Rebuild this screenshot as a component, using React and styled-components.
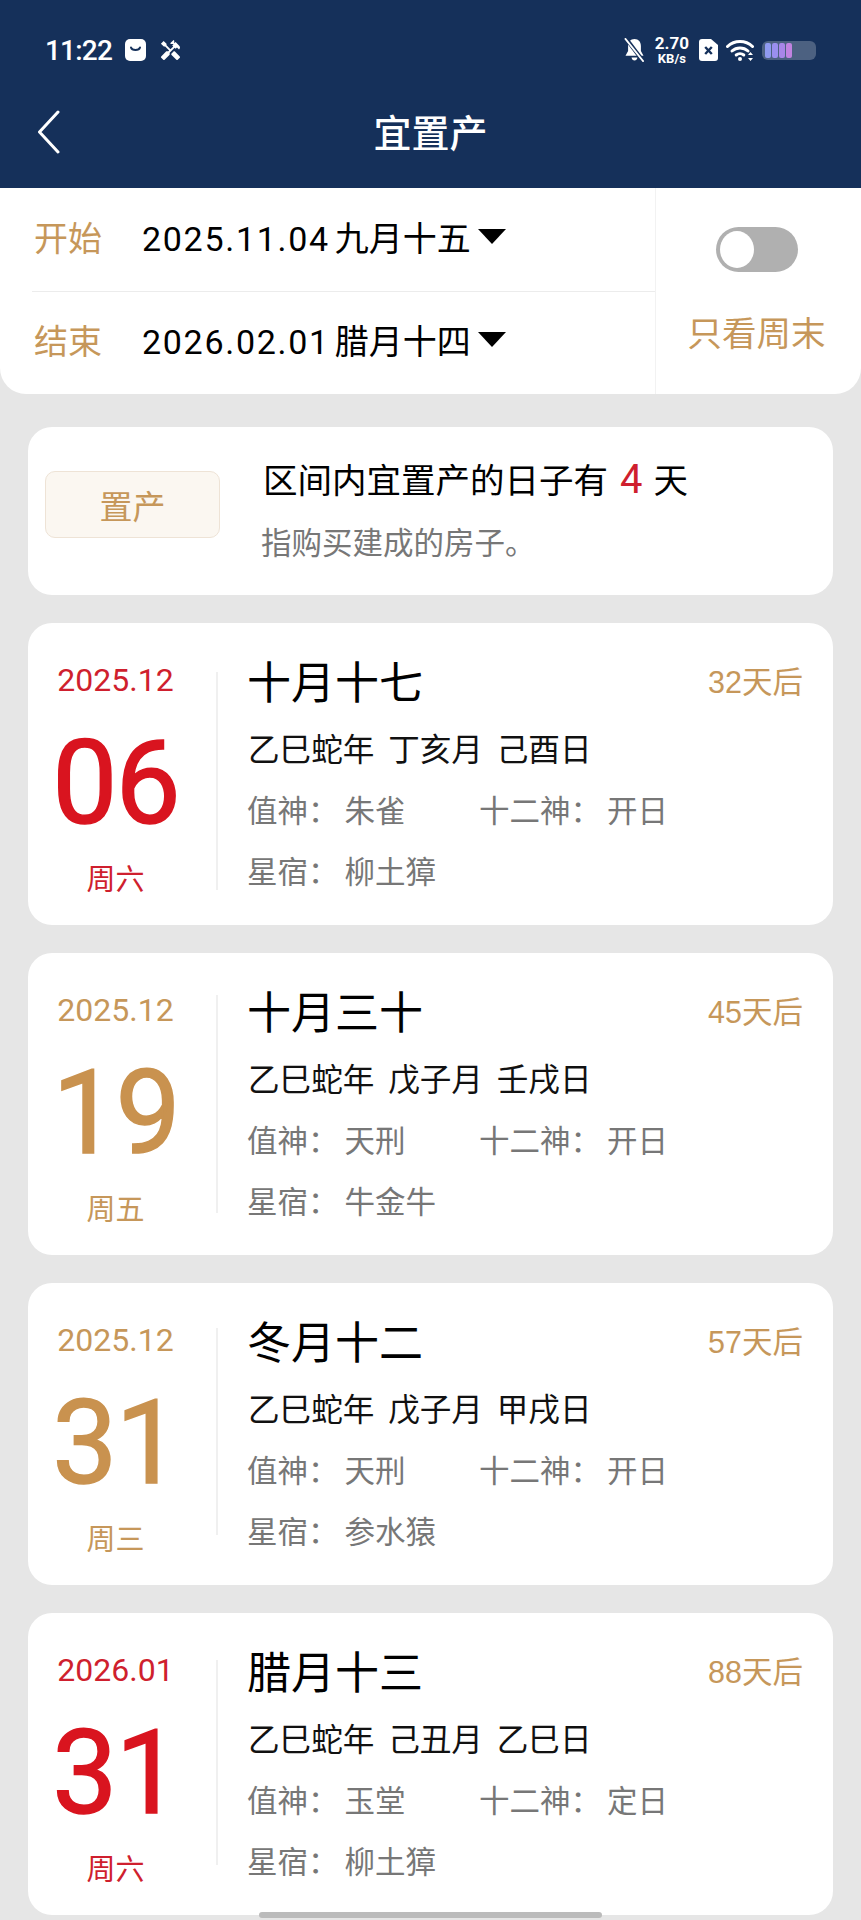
import React from 'react';
import styled, { createGlobalStyle } from 'styled-components';
import { MdHandyman } from 'react-icons/md';

const GOLD = '#c6975a';
const RED = '#cf1f2e';
const GREY = '#777777';
const CJK = '"Liberation Sans", "Noto Sans CJK SC", sans-serif';
const COLON = '\uFF1A';

const GlobalStyle = createGlobalStyle`
  html, body {
    margin: 0;
    padding: 0;
    background: #e6e6e6;
  }
  * {
    box-sizing: border-box;
  }
`;

const Page = styled.div`
  position: relative;
  width: 861px;
  height: 1920px;
  overflow: hidden;
  background: #e6e6e6;
  font-family: ${CJK};
`;

const Header = styled.header`
  height: 188px;
  padding: 28px 0 12px;
  background: #15305a;
  color: #fff;
`;

const StatusBar = styled.div`
  display: flex;
  align-items: center;
  justify-content: space-between;
  height: 44px;
  padding: 0 45px 0 45px;
  margin-bottom: 16px;
`;

const StatusGroup = styled.div`
  display: flex;
  align-items: center;
`;

const Clock = styled.span`
  font-family: Roboto, sans-serif;
  font-size: 28px;
  font-weight: 500;
  letter-spacing: -0.8px;
  margin-right: 13px;
`;

const Speed = styled.div`
  display: flex;
  flex-direction: column;
  align-items: center;
  margin: 0 10px;
  font-family: Roboto, sans-serif;
  font-weight: 700;
`;

const SpeedValue = styled.span`
  font-size: 17px;
  line-height: 17px;
`;

const SpeedUnit = styled.span`
  font-size: 13px;
  line-height: 13px;
`;

const Battery = styled.div`
  display: flex;
  gap: 1px;
  width: 54px;
  height: 19px;
  margin-left: 8px;
  padding: 2px 3px;
  border-radius: 6px;
  background: rgba(255, 255, 255, 0.24);
`;

const BatteryCell = styled.span`
  width: 6px;
  border-radius: 2px;
  background: ${(p) => p.$color};
`;

const NavBar = styled.div`
  display: grid;
  grid-template-columns: 1fr auto 1fr;
  align-items: center;
  height: 88px;
`;

const BackSlot = styled.div`
  display: flex;
  padding-left: 37px;
`;

const Title = styled.h1`
  margin: 4px 0 0;
  font-size: 38px;
  font-weight: 500;
  line-height: 48px;
`;

const FilterPanel = styled.section`
  display: grid;
  grid-template-columns: 656px 1fr;
  height: 206px;
  background: #fff;
  border-radius: 0 0 26px 26px;
`;

const DateColumn = styled.div`
  display: flex;
  flex-direction: column;
  padding-left: 32px;
  border-right: 1px solid #f2f2f2;
`;

const DateRow = styled.div`
  display: flex;
  align-items: center;
  height: ${(p) => p.$height}px;
  padding: 0 0 6px 2px;
  border-bottom: ${(p) => (p.$divided ? '1px solid #ececec' : 'none')};
`;

const DateLabel = styled.span`
  width: 108px;
  color: ${GOLD};
  font-size: 34px;
`;

const DateValue = styled.span`
  color: #000;
  font-size: 34px;
  white-space: nowrap;
`;

const DateDigits = styled.span`
  font-family: Roboto, sans-serif;
  letter-spacing: 1.7px;
  margin-right: 5px;
`;

const Caret = styled.span`
  width: 0;
  height: 0;
  margin-left: 7px;
  border-left: 14px solid transparent;
  border-right: 14px solid transparent;
  border-top: 15px solid #000;
`;

const WeekendColumn = styled.div`
  display: flex;
  flex-direction: column;
  align-items: center;
  padding: 39px 4px 0 0;
`;

const Toggle = styled.div`
  display: flex;
  align-items: center;
  width: 82px;
  height: 45px;
  padding-left: 4px;
  border-radius: 23px;
  background: #b0b0b0;
`;

const ToggleKnob = styled.span`
  width: 34px;
  height: 37px;
  border-radius: 50%;
  background: #fff;
`;

const WeekendLabel = styled.span`
  margin-top: 37px;
  color: ${GOLD};
  font-size: 34.5px;
  line-height: 50px;
  white-space: nowrap;
`;

const Content = styled.main`
  display: flex;
  flex-direction: column;
  gap: 28px;
  padding: 33px 28px 0;
`;

const SummaryCard = styled.div`
  display: flex;
  align-items: center;
  gap: 43px;
  height: 168px;
  padding: 0 17px;
  background: #fff;
  border-radius: 24px;
`;

const SummaryTag = styled.div`
  display: flex;
  align-items: center;
  justify-content: center;
  flex: none;
  width: 175px;
  height: 67px;
  margin-top: -13px;
  color: ${GOLD};
  font-size: 33px;
  background: #fbf7f1;
  border: 1px solid #eee3d6;
  border-radius: 10px;
`;

const SummaryText = styled.div`
  display: flex;
  flex-direction: column;
  gap: 21px;
`;

const SummaryTitle = styled.div`
  color: #000;
  font-size: 34.5px;
  line-height: 42px;
  white-space: nowrap;
`;

const SummaryCount = styled.span`
  margin: 0 11px 0 12px;
  color: ${RED};
  font-family: Roboto, sans-serif;
  font-size: 40px;
`;

const SummaryNote = styled.div`
  margin-left: -2px;
  color: ${GREY};
  font-size: 30.5px;
  line-height: 40px;
`;

const DayCard = styled.article`
  display: flex;
  height: 302px;
  background: #fff;
  border-radius: 24px;
`;

const DayColumn = styled.div`
  display: flex;
  flex-direction: column;
  align-items: center;
  justify-content: space-between;
  flex: none;
  width: 175px;
  padding: 37px 0 25px;
  margin-right: 13px;
  color: ${(p) => (p.$holiday ? RED : GOLD)};
`;

const DayMonth = styled.div`
  font-family: Roboto, sans-serif;
  font-size: 32px;
  line-height: 40px;
`;

const DayNumber = styled.div`
  margin-top: 6px;
  font-family: Roboto, sans-serif;
  font-size: 116px;
  line-height: 120px;
  letter-spacing: -2px;
  color: ${(p) => (p.$holiday ? '#d9141f' : '#c9924f')};
  -webkit-text-stroke: 1.5px ${(p) => (p.$holiday ? '#d9141f' : '#c9924f')};
`;

const DayWeek = styled.div`
  font-size: 29px;
  line-height: 40px;
`;

const Rule = styled.div`
  flex: none;
  width: 2px;
  height: ${(p) => p.$height}px;
  margin-top: ${(p) => p.$top}px;
  background: #f0f0f0;
`;

const DayBody = styled.div`
  flex: 1;
  display: flex;
  flex-direction: column;
  padding: 27px 30px 0 30px;
`;

const LunarRow = styled.div`
  display: flex;
  align-items: center;
  justify-content: space-between;
  height: 60px;
`;

const LunarDate = styled.div`
  color: #000;
  font-size: 44px;
  margin-left: -1px;
`;

const Countdown = styled.div`
  color: ${GOLD};
  font-size: 30.5px;
`;

const Ganzhi = styled.div`
  margin-top: 20px;
  color: #111;
  font-size: 31.6px;
  line-height: 40px;
  word-spacing: 5px;
`;

const InfoRow = styled.div`
  display: grid;
  grid-template-columns: 232px auto;
  justify-content: start;
  margin: 21px 0 0 -1px;
  color: ${GREY};
  font-size: 30.5px;
  line-height: 40px;
`;

const InfoValue = styled.span`
  margin-left: 6px;
`;

const HomeBar = styled.div`
  position: absolute;
  left: 259px;
  bottom: 2px;
  width: 343px;
  height: 6px;
  border-radius: 3px;
  background: #bbbbbb;
`;

const days = [
  {
    month: '2025.12', day: '06', week: '周六', holiday: true, lunar: '十月十七', after: '32天后',
    ganzhi: '乙巳蛇年 丁亥月 己酉日', god: '朱雀', twelve: '开日', star: '柳土獐', ruleTop: 49, ruleHeight: 218,
  },
  {
    month: '2025.12', day: '19', week: '周五', holiday: false, lunar: '十月三十', after: '45天后',
    ganzhi: '乙巳蛇年 戊子月 壬戌日', god: '天刑', twelve: '开日', star: '牛金牛', ruleTop: 42, ruleHeight: 218,
  },
  {
    month: '2025.12', day: '31', week: '周三', holiday: false, lunar: '冬月十二', after: '57天后',
    ganzhi: '乙巳蛇年 戊子月 甲戌日', god: '天刑', twelve: '开日', star: '参水猿', ruleTop: 45, ruleHeight: 207,
  },
  {
    month: '2026.01', day: '31', week: '周六', holiday: true, lunar: '腊月十三', after: '88天后',
    ganzhi: '乙巳蛇年 己丑月 乙巳日', god: '玉堂', twelve: '定日', star: '柳土獐', ruleTop: 47, ruleHeight: 205,
  },
];

const batteryColors = ['#8f9af0', '#9a8fee', '#a886e8', '#c183e0'];

function BagIcon() {
  return (
    <svg width="21" height="22" viewBox="0 0 21 22" style={{ marginRight: 13 }}>
      <rect x="0" y="0" width="21" height="22" rx="5" fill="#fff" />
      <path d="M6 8.500c1 3.400 8 3.400 9 0" fill="none" stroke="#15305a" strokeWidth="2" strokeLinecap="round" />
    </svg>
  );
}

function BellOffIcon() {
  return (
    <svg width="21" height="24" viewBox="0 0 21 24">
      <path d="M10.500 1c4.200 0 6.400 3.200 6.400 7v5l2.600 4.800H1.500L4.100 13V8c0-3.800 2.200-7 6.400-7z" fill="#fff" />
      <path d="M7.500 19.500h6c-.4 1.900-1.500 3-3 3s-2.600-1.100-3-3z" fill="#fff" />
      <path d="M2 0.500l17 22.500" stroke="#15305a" strokeWidth="4" />
      <path d="M1.500 1l17.500 22" stroke="#fff" strokeWidth="2" strokeLinecap="round" />
    </svg>
  );
}

function SimIcon() {
  return (
    <svg width="19" height="22" viewBox="0 0 19 22">
      <path d="M3 0h9l7 6v13a3 3 0 0 1-3 3H3a3 3 0 0 1-3-3V3a3 3 0 0 1 3-3z" fill="#fff" />
      <path d="M6.200 8l6.600 7M12.800 8l-6.600 7" stroke="#15305a" strokeWidth="2.400" />
    </svg>
  );
}

function WifiIcon() {
  return (
    <svg width="28" height="22" viewBox="0 0 28 22" style={{ marginLeft: 8 }}>
      <g fill="none" stroke="#fff" strokeWidth="3" strokeLinecap="round">
        <path d="M1.500 7.500C8.500 .8 19.500 .8 26.500 7.500" />
        <path d="M6 12c4.500-4 11.500-4 16 0" />
        <path d="M10.200 16c2.200-1.800 5.400-1.800 7.600 0" />
      </g>
      <circle cx="14" cy="20" r="2" fill="#fff" />
      <path d="M24.500 13l2.500 3h-5zM24.500 22l-2.500-3h5z" fill="#fff" />
    </svg>
  );
}

function BackIcon() {
  return (
    <svg width="23" height="44" viewBox="0 0 23 44">
      <path d="M21 2L2.500 22 21 42" fill="none" stroke="#fff" strokeWidth="3" strokeLinecap="round" strokeLinejoin="round" />
    </svg>
  );
}

function DayItem({ item }) {
  return (
    <DayCard>
      <DayColumn $holiday={item.holiday}>
        <DayMonth>{item.month}</DayMonth>
        <DayNumber $holiday={item.holiday}>{item.day}</DayNumber>
        <DayWeek>{item.week}</DayWeek>
      </DayColumn>
      <Rule $top={item.ruleTop} $height={item.ruleHeight} />
      <DayBody>
        <LunarRow>
          <LunarDate>{item.lunar}</LunarDate>
          <Countdown>{item.after}</Countdown>
        </LunarRow>
        <Ganzhi>{item.ganzhi}</Ganzhi>
        <InfoRow>
          <span>值神{COLON}<InfoValue>{item.god}</InfoValue></span>
          <span>十二神{COLON}<InfoValue>{item.twelve}</InfoValue></span>
        </InfoRow>
        <InfoRow>
          <span>星宿{COLON}<InfoValue>{item.star}</InfoValue></span>
        </InfoRow>
      </DayBody>
    </DayCard>
  );
}

export default function App() {
  return (
    <Page>
      <GlobalStyle />
      <Header>
        <StatusBar>
          <StatusGroup>
            <Clock>11:22</Clock>
            <BagIcon />
            <MdHandyman size={23} color="#fff" />
          </StatusGroup>
          <StatusGroup>
            <BellOffIcon />
            <Speed>
              <SpeedValue>2.70</SpeedValue>
              <SpeedUnit>KB/s</SpeedUnit>
            </Speed>
            <SimIcon />
            <WifiIcon />
            <Battery>
              {batteryColors.map((c) => <BatteryCell key={c} $color={c} />)}
            </Battery>
          </StatusGroup>
        </StatusBar>
        <NavBar>
          <BackSlot><BackIcon /></BackSlot>
          <Title>宜置产</Title>
        </NavBar>
      </Header>

      <FilterPanel>
        <DateColumn>
          <DateRow $height={104} $divided>
            <DateLabel>开始</DateLabel>
            <DateValue><DateDigits>2025.11.04</DateDigits>九月十五</DateValue>
            <Caret />
          </DateRow>
          <DateRow $height={100}>
            <DateLabel>结束</DateLabel>
            <DateValue><DateDigits>2026.02.01</DateDigits>腊月十四</DateValue>
            <Caret />
          </DateRow>
        </DateColumn>
        <WeekendColumn>
          <Toggle><ToggleKnob /></Toggle>
          <WeekendLabel>只看周末</WeekendLabel>
        </WeekendColumn>
      </FilterPanel>

      <Content>
        <SummaryCard>
          <SummaryTag>置产</SummaryTag>
          <SummaryText>
            <SummaryTitle>区间内宜置产的日子有<SummaryCount>4</SummaryCount>天</SummaryTitle>
            <SummaryNote>指购买建成的房子。</SummaryNote>
          </SummaryText>
        </SummaryCard>
        {days.map((item) => <DayItem key={item.lunar} item={item} />)}
      </Content>
      <HomeBar />
    </Page>
  );
}
